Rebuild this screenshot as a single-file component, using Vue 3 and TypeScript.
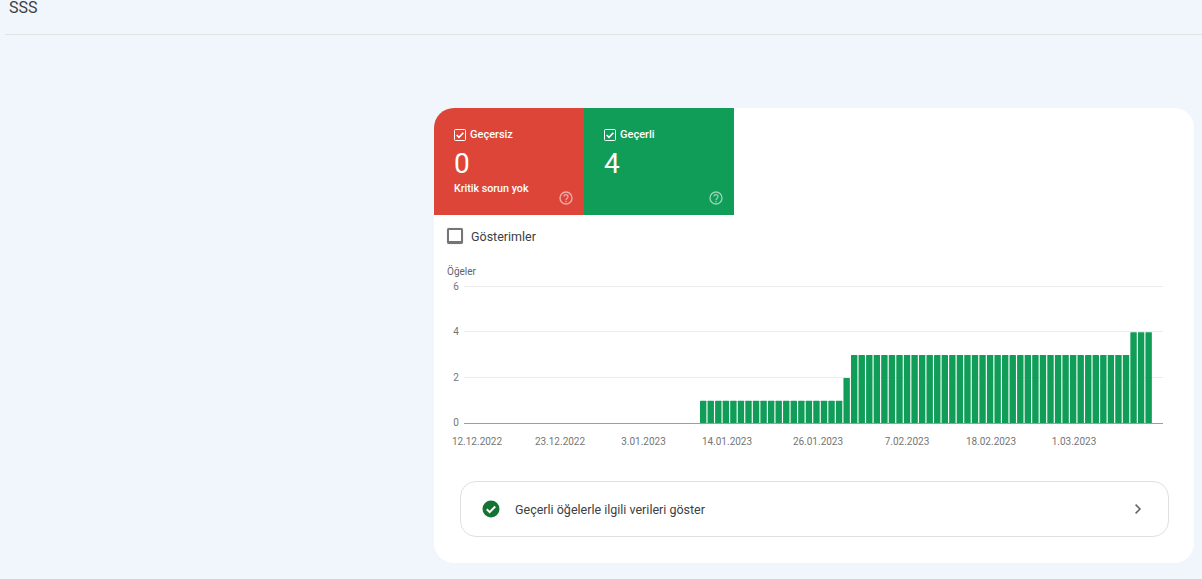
<script setup lang="ts">
import { computed } from 'vue'

// tiklanabilir kutular
const tiles = [
  { name: 'Geçersiz', value: 0, note: 'Kritik sorun yok', cls: 'red' },
  { name: 'Geçerli', value: 4, note: '', cls: 'green' }
]

// grafik verisi: 60 gun
const counts: number[] = [
  ...Array(19).fill(1),
  2,
  ...Array(37).fill(3),
  ...Array(3).fill(4)
]
const left = 266
const pitch = 7.55
const zeroY = 165.5
const unit = 22.8

const bars = computed(() =>
  counts.map((c, i) => ({
    x: left + i * pitch,
    y: zeroY - c * unit,
    h: c * unit
  }))
)
const ticks = [
  { label: '6', y: 28.5 },
  { label: '4', y: 73.5 },
  { label: '2', y: 119.5 }
]
const dates = [
  { label: '12.12.2022', x: 43 },
  { label: '23.12.2022', x: 126 },
  { label: '3.01.2023', x: 209.5 },
  { label: '14.01.2023', x: 293 },
  { label: '26.01.2023', x: 384 },
  { label: '7.02.2023', x: 473 },
  { label: '18.02.2023', x: 557 },
  { label: '1.03.2023', x: 640 }
]
</script>

<template>
  <div class="page">
    <header class="top">SSS</header>
    <main class="main">
      <section class="card">
        <div class="tiles">
          <div v-for="t in tiles" :key="t.name" class="tile" :class="t.cls">
            <div class="tile-head">
              <svg class="tick" width="12" height="12" viewBox="0 0 12 12">
                <rect x="0.5" y="0.5" width="11" height="11" rx="1" fill="none" stroke="#fff" />
                <path d="M2.6 6l2.4 2.4L9.4 3.8" fill="none" stroke="#fff" stroke-width="1.6" />
              </svg>
              <span>{{ t.name }}</span>
            </div>
            <div class="tile-value">{{ t.value }}</div>
            <div class="tile-note">{{ t.note }}</div>
            <svg class="help" width="14" height="14" viewBox="0 0 14 14">
              <circle cx="7" cy="7" r="6" fill="none" stroke="#fff" stroke-width="1.4" />
              <path d="M5 5.6a2 2 0 1 1 3.2 1.6c-.8.6-1.2.9-1.2 1.8" fill="none" stroke="#fff" stroke-width="1.3" />
              <rect x="6.3" y="9.8" width="1.4" height="1.4" fill="#fff" />
            </svg>
          </div>
        </div>

        <label class="metric">
          <span class="box"></span>
          <span>Gösterimler</span>
        </label>

        <svg class="chart" width="760" height="194" viewBox="0 0 760 194">
          <text x="13" y="17" class="axis-title">Öğeler</text>
          <g v-for="t in ticks" :key="t.label">
            <line x1="30" x2="729" :y1="t.y" :y2="t.y" stroke="#ececec" />
            <text x="22" :y="t.y + 3" text-anchor="middle" class="axis">{{ t.label }}</text>
          </g>
          <rect
            v-for="(b, i) in bars"
            :key="i"
            :x="b.x"
            :y="b.y"
            width="6.4"
            :height="b.h"
            rx="0.5"
            fill="#0f9d58"
          />
          <line x1="30" x2="729" y1="165.5" y2="165.5" stroke="#9e9e9e" />
          <text x="22" y="168" text-anchor="middle" class="axis">0</text>
          <text
            v-for="d in dates"
            :key="d.label"
            :x="d.x"
            y="187"
            text-anchor="middle"
            class="axis"
          >{{ d.label }}</text>
        </svg>

        <div class="show-row">
          <svg width="18" height="18" viewBox="0 0 18 18">
            <circle cx="9" cy="9" r="8.5" fill="#137333" />
            <path d="M4.8 9.2l2.9 2.9 5.5-5.6" fill="none" stroke="#fff" stroke-width="2" />
          </svg>
          <span class="show-text">Geçerli öğelerle ilgili verileri göster</span>
          <svg class="chev" width="8" height="12" viewBox="0 0 8 12">
            <path d="M1.6 1.6L6 6l-4.4 4.4" fill="none" stroke="#5f6368" stroke-width="1.5" />
          </svg>
        </div>
      </section>
    </main>
  </div>
</template>

<style>
html, body {
  margin: 0;
  background: #f1f5fc;
}
</style>

<style scoped>
.page {
  height: 579px;
  overflow: hidden;
  background: #f1f5fc;
  font-family: Roboto, "Liberation Sans", sans-serif;
}
.top {
  height: 34px;
  margin-left: 5px;
  padding-left: 4px;
  border-bottom: 1px solid #dfe3e3;
  font-size: 16px;
  line-height: 16px;
  color: #3c4043;
}
.main {
  display: flex;
  justify-content: flex-end;
  padding: 73px 8px 0 0;
}
.card {
  width: 760px;
  height: 455px;
  background: #fff;
  border-radius: 20px;
  overflow: hidden;
}
.tiles {
  display: flex;
}
.tile {
  position: relative;
  width: 150px;
  height: 107px;
  box-sizing: border-box;
  padding: 20px 20px 0;
  color: #fff;
}
.red {
  background: #dd4539;
}
.green {
  background: #109d58;
}
.tile-head {
  display: flex;
  align-items: center;
  gap: 4px;
  font-size: 11px;
  font-weight: 500;
  line-height: 13px;
}
.tile-value {
  margin-top: 7px;
  font-size: 28px;
  line-height: 32px;
}
.tile-note {
  margin-top: 2px;
  font-size: 10.7px;
  font-weight: 500;
  line-height: 14px;
}
.help {
  position: absolute;
  right: 11px;
  bottom: 10px;
  opacity: 0.55;
}
.metric {
  display: flex;
  align-items: center;
  gap: 8px;
  height: 16px;
  margin: 13px 0 0 13px;
  font-size: 12.5px;
  color: #3c4043;
}
.box {
  width: 12px;
  height: 11px;
  border: 2px solid #757575;
  border-bottom-width: 3px;
  border-radius: 2px;
  background: #fff;
  box-shadow: 0 0 1px #9e9e9e;
}
.chart {
  display: block;
  margin-top: 14px;
}
.axis-title {
  font-size: 10px;
  fill: #5f6368;
}
.axis {
  font-size: 10px;
  fill: #757575;
}
.show-row {
  display: flex;
  align-items: center;
  width: 709px;
  height: 56px;
  box-sizing: border-box;
  margin: 29px 0 0 26px;
  padding: 0 26px 0 21px;
  border: 1px solid #e0e0e0;
  border-radius: 16px;
}
.show-text {
  margin-left: 15px;
  flex: 1;
  font-size: 12.5px;
  color: #3c4043;
}
</style>
